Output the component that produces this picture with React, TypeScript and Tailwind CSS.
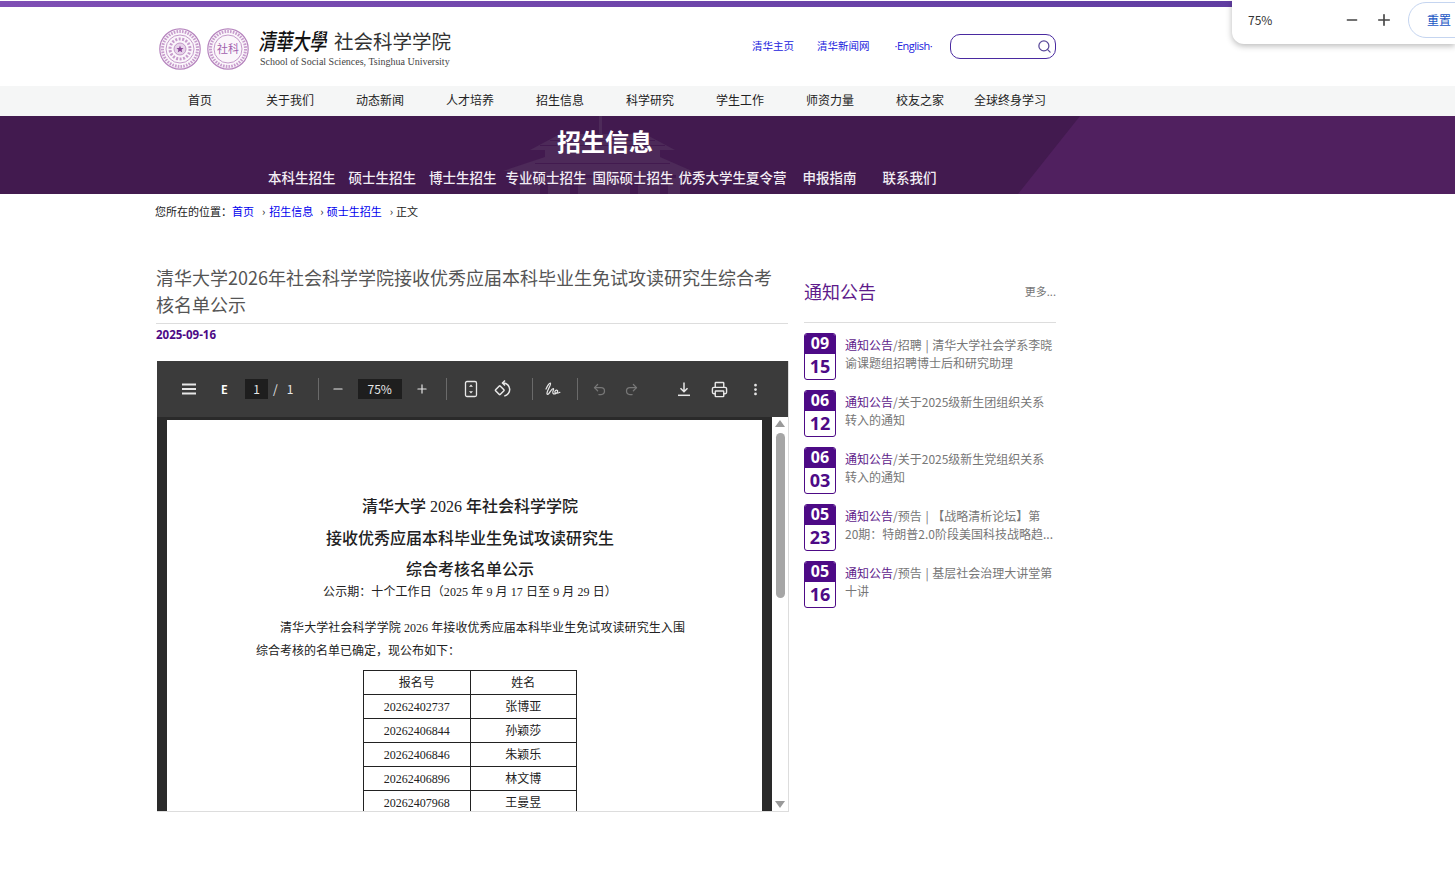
import { EllipsisVertical, Minus, Plus, Printer, Redo2, Search, Undo2 } from "lucide-react";

const SANS = "font-['Noto_Sans_CJK_SC','Noto_Sans',sans-serif]";
const SERIF = "font-['Liberation_Serif','Noto_Sans_CJK_SC',serif]";

const NAV = ["首页", "关于我们", "动态新闻", "人才培养", "招生信息", "科学研究", "学生工作", "师资力量", "校友之家", "全球终身学习"];

const SUB_NAV = [
  { label: "本科生招生", cls: "ml-0" },
  { label: "硕士生招生", cls: "ml-[13px]" },
  { label: "博士生招生", cls: "ml-[13px]" },
  { label: "专业硕士招生", cls: "ml-[9px]" },
  { label: "国际硕士招生", cls: "ml-[6px]" },
  { label: "优秀大学生夏令营", cls: "ml-[5px]" },
  { label: "申报指南", cls: "ml-[16px]" },
  { label: "联系我们", cls: "ml-[26px]" },
];

const NOTICES = [
  { mm: "09", dd: "15", text: "/招聘 | 清华大学社会学系李晓谕课题组招聘博士后和研究助理" },
  { mm: "06", dd: "12", text: "/关于2025级新生团组织关系\n转入的通知" },
  { mm: "06", dd: "03", text: "/关于2025级新生党组织关系\n转入的通知" },
  { mm: "05", dd: "23", text: "/预告 | 【战略清析论坛】第\n20期：特朗普2.0阶段美国科技战略趋..." },
  { mm: "05", dd: "16", text: "/预告 | 基层社会治理大讲堂第\n十讲" },
];

const ROWS = [
  ["20262402737", "张博亚"],
  ["20262406844", "孙颖莎"],
  ["20262406846", "朱颖乐"],
  ["20262406896", "林文博"],
  ["20262407968", "王曼昱"],
];

function Seal({ label }: { label?: string }) {
  return (
    <svg width="42" height="42" viewBox="0 0 42 42" className="shrink-0">
      <circle cx="21" cy="21" r="20.2" fill="#fbf6fb" stroke="#b583bd" strokeWidth="1.2" />
      <circle cx="21" cy="21" r="17.5" fill="none" stroke="#c79ccd" strokeWidth="3" strokeDasharray="1.6 1.2" />
      <circle cx="21" cy="21" r="14" fill="none" stroke="#b583bd" strokeWidth="0.8" />
      {label ? (
        <text x="21" y="25" textAnchor="middle" fontSize="11" fill="#a25fae" fontFamily="Noto Sans CJK TC">
          {label}
        </text>
      ) : (
        <>
          <circle cx="21" cy="21" r="10" fill="none" stroke="#c79ccd" strokeWidth="3" strokeDasharray="2 1.5" />
          <circle cx="21" cy="21" r="6" fill="#e7d3ea" stroke="#b583bd" strokeWidth="0.8" />
          <path d="M21 17.5l1 2.4 2.6.2-2 1.7.6 2.5-2.2-1.4-2.2 1.4.6-2.5-2-1.7 2.600-.2z" fill="#8d4a9b" />
        </>
      )}
    </svg>
  );
}

function HamburgerIcon() {
  return (
    <svg width="16" height="12" viewBox="0 0 16 12" fill="#e8e8e8">
      <rect x="1" y="0.500" width="14" height="2" />
      <rect x="1" y="5" width="14" height="2" />
      <rect x="1" y="9.500" width="14" height="2" />
    </svg>
  );
}

function FitIcon() {
  return (
    <svg width="14" height="18" viewBox="0 0 14 18" fill="none" stroke="#e8e8e8" strokeWidth="1.3">
      <rect x="1.5" y="1.500" width="11" height="15" rx="1.500" />
      <path d="M7 4.500 5 6.800h4zM7 13.500 5 11.200h4z" fill="#e8e8e8" stroke="none" />
    </svg>
  );
}

function RotateIcon() {
  return (
    <svg width="20" height="20" viewBox="0 0 20 20" fill="none" stroke="#e8e8e8" strokeWidth="1.500">
      <rect x="3.500" y="8" width="6.500" height="6.500" transform="rotate(45 6.750 11.250)" rx="0.600" />
      <path d="M9.500 4h1a6.500 6.500 0 0 1 .8 12.900" />
      <path d="M12 1.500 9.500 4 12 6.500" />
    </svg>
  );
}

function DrawIcon() {
  return (
    <svg width="18" height="16" viewBox="0 0 18 16" fill="none" stroke="#e8e8e8" strokeWidth="1.200" strokeLinecap="round">
      <path d="M2 8C3.500 5 5.500 1.500 6.500 2.200 7.500 3 3.500 9 3 12c-.3 1.800 1 1.600 2 .3 1.800-2.400 3-5 4.300-4.800 1.200.3-1.500 3.200-.3 4.800 1 1.300 4.500.3 4.700-2 .1-1.600-2.300-1.400-2.800.2-.4 1.500 1.500 2.500 5 .8" />
    </svg>
  );
}

function DownloadIcon() {
  return (
    <svg width="16" height="16" viewBox="0 0 16 16" fill="none" stroke="#e8e8e8" strokeWidth="1.500">
      <path d="M8 1.500v9M4.500 7.200 8 10.700l3.500-3.500" />
      <path d="M2 14.300h12" />
    </svg>
  );
}

function Divider() {
  return <span className="block h-[22px] w-px bg-[#6a6a6a]" />;
}

function PdfToolbar() {
  return (
    <div className={`flex h-14 items-center bg-[#3b3b3b] pl-[24px] text-[#e8e8e8] ${SANS}`}>
      <HamburgerIcon />
      <span className="ml-[24px] w-[5px] text-[11px] font-bold leading-none text-white">E</span>
      <span className="ml-[19px] flex h-5 w-[23px] items-center justify-center bg-[#1e1e1e] text-xs">1</span>
      <span className="ml-[5px] text-xs">/</span>
      <span className="ml-[9px] w-[18px] text-xs">1</span>
      <span className="ml-[13px]"><Divider /></span>
      <Minus size={14} className="ml-[12px]" />
      <span className="ml-[13px] flex h-5 w-[44px] items-center justify-center bg-[#1e1e1e] text-xs">75%</span>
      <Plus size={14} className="ml-[13px]" />
      <span className="ml-[17px]"><Divider /></span>
      <span className="ml-[17px] flex"><FitIcon /></span>
      <span className="ml-[15px] flex"><RotateIcon /></span>
      <span className="ml-[19px]"><Divider /></span>
      <span className="ml-[11px] flex"><DrawIcon /></span>
      <span className="ml-[15px]"><Divider /></span>
      <Undo2 size={15} color="#777" className="ml-[14px]" />
      <Redo2 size={15} color="#777" className="ml-[17px]" />
      <span className="ml-[37px] flex"><DownloadIcon /></span>
      <Printer size={17} className="ml-[19px]" />
      <EllipsisVertical size={15} strokeWidth={2.400} className="ml-[20px]" />
    </div>
  );
}

function PdfPage() {
  return (
    <div className={`h-full bg-white pt-[77px] text-[#222] ${SERIF}`}>
      <div className="flex flex-col items-center pl-[11px] text-base font-medium">
        <p className="h-[32px] leading-[20px]">清华大学 2026 年社会科学学院</p>
        <p className="h-[31px] leading-[20px]">接收优秀应届本科毕业生免试攻读研究生</p>
        <p className="h-[23px] leading-[20px]">综合考核名单公示</p>
        <p className="h-[24px] text-xs font-normal leading-[18px] tracking-[0.08px]">公示期：十个工作日（2025 年 9 月 17 日至 9 月 29 日）</p>
      </div>
      <p className="mt-[10px] pl-[113px] text-xs leading-[23px] tracking-[0.08px]">清华大学社会科学学院 2026 年接收优秀应届本科毕业生免试攻读研究生入围</p>
      <p className="pl-[89px] text-xs leading-[23px]">综合考核的名单已确定，现公布如下：</p>
      <table className="ml-[196px] mt-[7px] w-[214px] table-fixed border-collapse text-center text-xs">
        <tbody>
          <tr className="h-6">
            <td className="border border-[#222]">报名号</td>
            <td className="border border-[#222]">姓名</td>
          </tr>
          {ROWS.map(([no, name]) => (
            <tr key={no} className="h-6">
              <td className="border border-[#222]">{no}</td>
              <td className="border border-[#222]">{name}</td>
            </tr>
          ))}
        </tbody>
      </table>
    </div>
  );
}

function PdfViewer() {
  return (
    <div className="ml-px mt-[22px] h-[451px] w-[632px] overflow-hidden border-b border-r border-[#dddddd]">
      <PdfToolbar />
      <div className="flex h-[394px]">
        <div className="h-full w-[615px] overflow-hidden bg-[#2a2a2a] px-[10px] pt-[3px]">
          <PdfPage />
        </div>
        <div className="flex h-full w-[16px] flex-col items-center bg-white pt-[3px]">
          <span className="h-0 w-0 border-x-[5px] border-b-[7px] border-x-transparent border-b-[#999]" />
          <span className="mt-[6px] h-[165px] w-[9px] rounded-full bg-[#a6a6a6]" />
          <span className="mt-auto mb-[3px] h-0 w-0 border-x-[5px] border-t-[7px] border-x-transparent border-t-[#999]" />
        </div>
      </div>
    </div>
  );
}

function Sidebar() {
  return (
    <aside className="ml-[16px] w-[252px] pt-[2px]">
      <div className="flex h-[57px] items-start justify-between border-b border-[#dddddd] pt-[12px]">
        <h2 className="text-lg leading-[27px] text-[#5e1b8b]">通知公告</h2>
        <span className="mt-[5px] text-[11px] leading-[16px] text-[#777]">更多...</span>
      </div>
      <ul className="mt-[10px] flex flex-col gap-[10px]">
        {NOTICES.map((n) => (
          <li key={n.mm + n.dd} className="flex h-[47px]">
            <div className="flex h-[47px] w-[32px] shrink-0 flex-col overflow-hidden rounded-[3px] border border-[#4d0a86] text-center font-['Open_Sans',sans-serif] font-bold">
              <span className="h-[20px] bg-[#4d0a86] text-[16px] leading-[19px] text-white">{n.mm}</span>
              <span className="text-[18px] leading-[24px] text-[#4d0a86]">{n.dd}</span>
            </div>
            <p className="ml-[9px] whitespace-pre-line pt-[3px] text-xs leading-[18px] text-[#777] [word-spacing:1px]">
              <span className="text-[#5e1b8b]">通知公告</span>
              {n.text}
            </p>
          </li>
        ))}
      </ul>
    </aside>
  );
}

function Banner() {
  return (
    <div className="relative h-[78px] overflow-hidden bg-[#421a4f]">
      <svg className="absolute left-0 top-0" width="1455" height="78" viewBox="0 0 1455 78">
        <polygon points="1080,0 1455,0 1455,78 1018,78" fill="#50205f" />
        <g fill="#4d2a59">
          <rect x="599" y="0" width="3" height="18" />
          <polygon points="530,34 560,18 645,18 675,34" />
          <rect x="545" y="34" width="115" height="7" />
          <polygon points="503,55 545,41 660,41 692,55" />
          <rect x="520" y="55" width="160" height="23" />
        </g>
        <g fill="#421a4f">
          <rect x="550" y="24" width="105" height="1" />
          <rect x="540" y="29" width="125" height="1" />
          <rect x="535" y="47" width="135" height="1" />
          <rect x="526" y="59" width="150" height="3" />
          <rect x="540" y="66" width="8" height="12" />
          <rect x="570" y="66" width="8" height="12" />
          <rect x="630" y="66" width="8" height="12" />
          <rect x="660" y="66" width="8" height="12" />
        </g>
      </svg>
      <div className="relative flex h-full flex-col">
        <h1 className="pl-[557px] pt-[7px] text-2xl font-bold leading-[36px] text-white">招生信息</h1>
        <nav className="mt-[8px] flex pl-[268px] text-[13.5px] font-medium leading-[20px] text-[#f2edf4]">
          {SUB_NAV.map((item) => (
            <span key={item.label} className={`whitespace-nowrap ${item.cls}`}>
              {item.label}
            </span>
          ))}
        </nav>
      </div>
    </div>
  );
}

export default function App() {
  return (
    <div className={`relative h-[869px] overflow-hidden bg-white ${SANS}`}>
      <div className="mt-px h-[6px] bg-gradient-to-r from-[#7f4fb4] to-[#5b3a9e]" />

      <header className="flex h-[79px] items-center pl-[159px]">
        <span className="mt-[4px] flex"><Seal /></span>
        <span className="ml-[6px] mt-[4px] flex"><Seal label="社科" /></span>
        <div className="ml-[11px] mt-[4px] w-[192px]">
          <div className="flex items-center">
            <span className="w-[68px] -skew-x-12 scale-y-[1.35] whitespace-nowrap font-['Noto_Sans_CJK_TC',sans-serif] text-[17px] font-medium leading-[26px] text-[#111]">清華大學</span>
            <span className="ml-[6px] whitespace-nowrap text-[19.5px] leading-[26px] text-[#333]">社会科学学院</span>
          </div>
          <p className={`mt-px whitespace-nowrap text-[10px] leading-[14px] text-[#444] ${SERIF}`}>School of Social Sciences, Tsinghua University</p>
        </div>
        <div className="mb-[1px] ml-[300px] flex items-center text-[10.5px] text-[#2222dd]">
          <span>清华主页</span>
          <span className="ml-[23px]">清华新闻网</span>
          <span className="ml-[25px] w-[40px] whitespace-nowrap font-['Open_Sans',sans-serif] text-[11px] tracking-[-0.5px]">·English·</span>
          <div className="ml-[15px] flex h-[25px] w-[106px] items-center justify-end rounded-[10px] border border-[#4a2aa0] pr-[3px]">
            <Search size={15} color="#5a4a9a" strokeWidth={2} />
          </div>
        </div>
      </header>

      <nav className="flex h-[30px] items-center bg-[#f5f6f6] pb-[2px] pl-[155px] text-xs text-[#222]">
        {NAV.map((label) => (
          <span key={label} className="w-[90px] text-center">
            {label}
          </span>
        ))}
      </nav>

      <Banner />

      <div className="flex h-[36px] items-center pb-[2px] pl-[155px] text-[11px] text-[#222]">
        <span>您所在的位置：</span>
        <span className="text-[#0000ee]">首页</span>
        <span className="ml-[8px]">›</span>
        <span className="ml-[4px] text-[#0000ee]">招生信息</span>
        <span className="ml-[7px]">›</span>
        <span className="ml-[3px] text-[#0000ee]">硕士生招生</span>
        <span className="ml-[8px]">›</span>
        <span className="ml-[3px]">正文</span>
      </div>

      <main className="flex pl-[156px] pt-[34px]">
        <article className="w-[632px]">
          <h1 className="border-b border-[#dddddd] pb-[5px] text-lg font-normal leading-[27px] text-[#555]">
            清华大学2026年社会科学学院接收优秀应届本科毕业生免试攻读研究生综合考核名单公示
          </h1>
          <p className="h-[15px] pt-[3px] font-['Open_Sans',sans-serif] text-[11.5px] font-bold leading-[15px] text-[#4d0a86]">2025-09-16</p>
          <PdfViewer />
        </article>
        <Sidebar />
      </main>

      <div className="absolute right-0 top-0 flex h-[44px] w-[223px] items-center overflow-hidden rounded-bl-xl bg-white pb-[4px] pl-[16px] shadow-[0_2px_6px_rgba(0,0,0,0.28)]">
        <span className="w-[96px] shrink-0 text-xs text-[#333]">75%</span>
        <Minus size={16} strokeWidth={2.200} color="#444" className="shrink-0" />
        <Plus size={18} strokeWidth={2.200} color="#444" className="ml-[15px] shrink-0" />
        <span className="ml-[15px] flex h-[36px] w-[70px] shrink-0 items-center rounded-full border border-[#c5d5f0] pl-[18px] text-xs text-[#1a56c4]">重置</span>
      </div>
    </div>
  );
}
